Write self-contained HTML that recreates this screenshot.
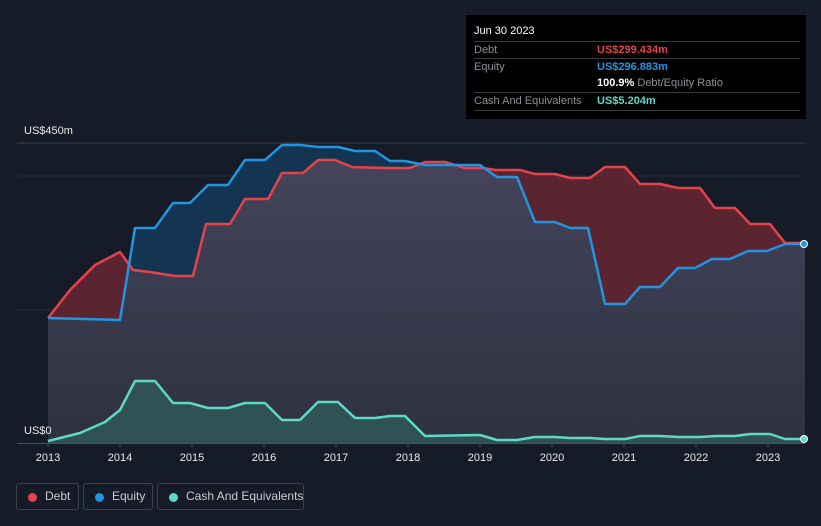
<!DOCTYPE html>
<html><head><meta charset="utf-8"><style>
html,body{margin:0;height:526px}
body{background:#161c27;width:821px;overflow:hidden;font-family:"Liberation Sans",sans-serif;position:relative}
.lbl{position:absolute;color:#e8e8ea;font-size:11px}
.tt{position:absolute;left:466px;top:15px;width:340px;height:104px;background:#000;color:#fff;font-size:11px}
.tt .r{position:absolute;left:8px;width:326px;border-top:1px solid #3a3a3a;height:17px;line-height:17px}
.g{color:#8d8f94}
.leg{position:absolute;top:483px;height:27px;border:1px solid #3b404a;border-radius:3px;color:#c9cbcf;font-size:12px;line-height:25px;box-sizing:border-box;white-space:nowrap}
.leg i{position:absolute;left:11px;top:9px;width:9px;height:9px;border-radius:50%}
</style></head><body>
<svg width="821" height="526" style="position:absolute;left:0;top:0">
<defs>
<clipPath id="eq"><path d="M48,318 L120,320 L135,228 L155,228 L173,203 L190,203 L208,185 L228,185 L245,160 L265,160 L282,145 L300,145 L318,147 L338,147 L355,151 L375,151 L390,161 L405,161 L425,165 L480,165 L497,177 L517,177 L535,222 L555,222 L570,228 L588,228 L605,304 L625,304 L640,287 L660,287 L678,268 L695,268 L712,259 L730,259 L748,251 L767,251 L785,244 L805,244 L805,443 L48,443Z"/></clipPath>
<linearGradient id="gr" x1="0" y1="0" x2="0" y2="1"><stop offset="0" stop-color="#45445b"/><stop offset="1" stop-color="#2d3140"/></linearGradient>
</defs>
<line x1="17" y1="143" x2="805" y2="143" stroke="#3a3f4a"/>
<line x1="17" y1="176" x2="805" y2="176" stroke="#262c37"/>
<line x1="17" y1="310" x2="805" y2="310" stroke="#262c37"/>
<path d="M48,318 L70,290 L95,265 L120,252 L133,270 L150,272 L175,276 L193,276 L206,224 L230,224 L245,199 L268,199 L282,173 L303,173 L318,160 L335,160 L352,167 L385,168 L410,168 L425,162 L445,162 L465,168 L483,168 L495,170 L520,170 L535,174 L555,174 L570,178 L590,178 L605,167 L625,167 L640,184 L660,184 L678,188 L700,188 L715,208 L735,208 L750,224 L770,224 L785,243 L805,243 L805,443 L48,443Z" fill="#5a2430"/>
<path d="M48,318 L120,320 L135,228 L155,228 L173,203 L190,203 L208,185 L228,185 L245,160 L265,160 L282,145 L300,145 L318,147 L338,147 L355,151 L375,151 L390,161 L405,161 L425,165 L480,165 L497,177 L517,177 L535,222 L555,222 L570,228 L588,228 L605,304 L625,304 L640,287 L660,287 L678,268 L695,268 L712,259 L730,259 L748,251 L767,251 L785,244 L805,244 L805,443 L48,443Z" fill="#143552"/>
<path d="M48,318 L70,290 L95,265 L120,252 L133,270 L150,272 L175,276 L193,276 L206,224 L230,224 L245,199 L268,199 L282,173 L303,173 L318,160 L335,160 L352,167 L385,168 L410,168 L425,162 L445,162 L465,168 L483,168 L495,170 L520,170 L535,174 L555,174 L570,178 L590,178 L605,167 L625,167 L640,184 L660,184 L678,188 L700,188 L715,208 L735,208 L750,224 L770,224 L785,243 L805,243 L805,443 L48,443Z" fill="url(#gr)" clip-path="url(#eq)"/>
<path d="M48,441 L80,433 L105,422 L120,410 L135,381 L155,381 L173,403 L190,403 L208,408 L228,408 L245,403 L265,403 L282,420 L300,420 L318,402 L338,402 L355,418 L375,418 L390,416 L405,416 L425,436 L480,435 L497,440 L517,440 L535,437 L555,437 L570,438 L590,438 L605,439 L625,439 L640,436 L660,436 L678,437 L700,437 L715,436 L735,436 L750,434 L770,434 L785,439 L805,439 L805,443 L48,443Z" fill="#2f5a5a" opacity="0.8"/>
<g fill="none" stroke-width="2.5" stroke-linejoin="round">
<path d="M48,318 L70,290 L95,265 L120,252 L133,270 L150,272 L175,276 L193,276 L206,224 L230,224 L245,199 L268,199 L282,173 L303,173 L318,160 L335,160 L352,167 L385,168 L410,168 L425,162 L445,162 L465,168 L483,168 L495,170 L520,170 L535,174 L555,174 L570,178 L590,178 L605,167 L625,167 L640,184 L660,184 L678,188 L700,188 L715,208 L735,208 L750,224 L770,224 L785,243 L805,243" stroke="#e5434c"/>
<path d="M48,318 L120,320 L135,228 L155,228 L173,203 L190,203 L208,185 L228,185 L245,160 L265,160 L282,145 L300,145 L318,147 L338,147 L355,151 L375,151 L390,161 L405,161 L425,165 L480,165 L497,177 L517,177 L535,222 L555,222 L570,228 L588,228 L605,304 L625,304 L640,287 L660,287 L678,268 L695,268 L712,259 L730,259 L748,251 L767,251 L785,244 L805,244" stroke="#2394df"/>
<path d="M48,441 L80,433 L105,422 L120,410 L135,381 L155,381 L173,403 L190,403 L208,408 L228,408 L245,403 L265,403 L282,420 L300,420 L318,402 L338,402 L355,418 L375,418 L390,416 L405,416 L425,436 L480,435 L497,440 L517,440 L535,437 L555,437 L570,438 L590,438 L605,439 L625,439 L640,436 L660,436 L678,437 L700,437 L715,436 L735,436 L750,434 L770,434 L785,439 L805,439" stroke="#5fd8c5"/>
</g>
<circle cx="804" cy="244" r="3.5" fill="#2394df" stroke="#fff" stroke-width="1"/>
<circle cx="804" cy="439" r="3.5" fill="#5fd8c5" stroke="#fff" stroke-width="1"/>
<line x1="17" y1="443.5" x2="805" y2="443.5" stroke="#4a505a"/>
<g stroke="#4a505a"><line x1="48" y1="443" x2="48" y2="447"/><line x1="120" y1="443" x2="120" y2="447"/><line x1="192" y1="443" x2="192" y2="447"/><line x1="264" y1="443" x2="264" y2="447"/><line x1="336" y1="443" x2="336" y2="447"/><line x1="408" y1="443" x2="408" y2="447"/><line x1="480" y1="443" x2="480" y2="447"/><line x1="552" y1="443" x2="552" y2="447"/><line x1="624" y1="443" x2="624" y2="447"/><line x1="696" y1="443" x2="696" y2="447"/><line x1="768" y1="443" x2="768" y2="447"/></g>
<g fill="#e8e8ea" font-size="11" text-anchor="middle" font-family="Liberation Sans"><text x="48" y="461">2013</text><text x="120" y="461">2014</text><text x="192" y="461">2015</text><text x="264" y="461">2016</text><text x="336" y="461">2017</text><text x="408" y="461">2018</text><text x="480" y="461">2019</text><text x="552" y="461">2020</text><text x="624" y="461">2021</text><text x="696" y="461">2022</text><text x="768" y="461">2023</text></g>
</svg>
<div class="lbl" style="left:24px;top:125px">US$450m</div>
<div class="lbl" style="left:24px;top:425px">US$0</div>
<div class="tt">
<div style="position:absolute;left:8px;top:10px">Jun 30 2023</div>
<div class="r" style="top:26px"><span class="g">Debt</span><span style="position:absolute;left:123px;color:#e5434c;font-weight:bold">US$299.434m</span></div>
<div class="r" style="top:43px"><span class="g">Equity</span><span style="position:absolute;left:123px;color:#2394df;font-weight:bold">US$296.883m</span></div>
<div class="r" style="top:60px;border:none"><span style="position:absolute;left:123px"><b>100.9%</b> <span class="g">Debt/Equity Ratio</span></span></div>
<div class="r" style="top:77px"><span class="g">Cash And Equivalents</span><span style="position:absolute;left:123px;color:#5fd8c5;font-weight:bold">US$5.204m</span></div>
<div class="r" style="top:95px;height:0"></div>
</div>
<div class="leg" style="left:16px;width:63px"><i style="background:#e5434c"></i><span style="margin-left:28px">Debt</span></div>
<div class="leg" style="left:83px;width:70px"><i style="background:#2394df"></i><span style="margin-left:28px">Equity</span></div>
<div class="leg" style="left:157px;width:147px"><i style="background:#5fd8c5"></i><span style="margin-left:28px">Cash And Equivalents</span></div>
</body></html>
